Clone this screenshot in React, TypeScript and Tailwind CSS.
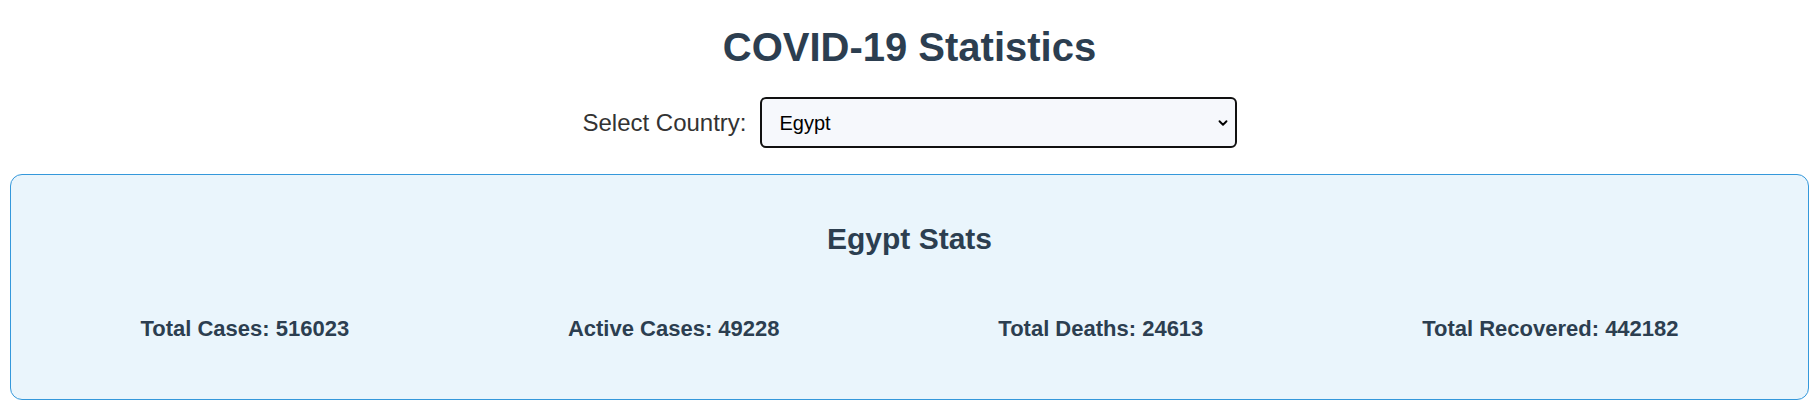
import { useState } from "react";
import { ChevronDown } from "lucide-react";

const stats: Record<string, { cases: number; active: number; deaths: number; recovered: number }> = {
  Egypt: { cases: 516023, active: 49228, deaths: 24613, recovered: 442182 },
  USA: { cases: 103436829, active: 1250000, deaths: 1127152, recovered: 101059677 },
  Italy: { cases: 25603510, active: 140000, deaths: 190357, recovered: 25273153 },
};

export default function App() {
  const [country, setCountry] = useState("Egypt");
  const s = stats[country];

  return (
    <div className="bg-white px-[10px] pt-[24px] pb-[16px] font-['Liberation_Sans',Arial,sans-serif]">
      {/* HEADER */}
      <h1 className="text-center text-[40px] leading-[46px] font-bold text-[#2c3e50]">
        COVID-19 Statistics
      </h1>

      {/* COUNTRY PICKER */}
      <div className="mt-[27px] flex items-center justify-center gap-[13px]">
        <label htmlFor="country" className="text-[24px] leading-[28px] text-[#333]">
          Select Country:
        </label>
        <div className="relative">
          <select
            id="country"
            value={country}
            onChange={(e) => setCountry(e.target.value)}
            className="block h-[51px] w-[477px] appearance-none rounded-[6px] border-2 border-[#111] bg-[#f6f8fc] pl-[18px] text-[20px] text-black outline-none"
          >
            {Object.keys(stats).map((c) => (
              <option key={c} value={c}>
                {c}
              </option>
            ))}
          </select>
          <ChevronDown
            size={14}
            strokeWidth={3.2}
            className="pointer-events-none absolute right-[7px] top-1/2 -translate-y-1/2 text-black"
          />
        </div>
      </div>

      {/* STATS CARD */}
      <div className="mt-[26px] rounded-[12px] border border-[#3498db] bg-[#eaf5fc] px-[20px] pt-[47px] pb-[58px]">
        <h2 className="text-center text-[30px] leading-[34px] font-bold text-[#2c3e50]">
          {country} Stats
        </h2>
        <div className="mt-[60px] flex justify-around text-[22px] leading-[25px] font-bold text-[#2c3e50]">
          <p>Total Cases: {s.cases}</p>
          <p>Active Cases: {s.active}</p>
          <p>Total Deaths: {s.deaths}</p>
          <p>Total Recovered: {s.recovered}</p>
        </div>
      </div>
    </div>
  );
}
